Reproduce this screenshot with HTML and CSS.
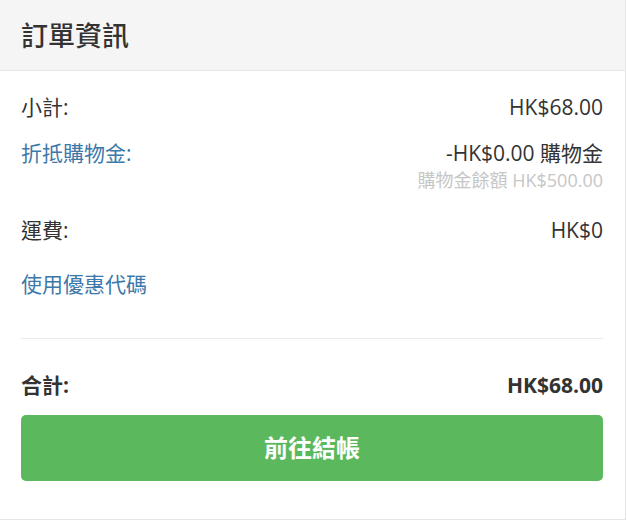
FILE: index.html
```html
<!DOCTYPE html>
<html lang="zh-Hant">
<head>
    <meta charset="UTF-8" />
    <meta name="viewport" content="width=device-width, initial-scale=1.0"/>
    <title>訂單資訊</title>
    <link rel="stylesheet" href="styles.css">
</head>
<body>
    <section class="order-panel">
        <div class="panel-heading">訂單資訊</div>
        <div class="panel-body">
            <div class="row row-subtotal">
                <span>小計:</span>
                <span>HK$68.00</span>
            </div>
            <div class="row row-credit">
                <a href="#" class="link">折抵購物金:</a>
                <div class="credit-values">
                    <span>-HK$0.00 購物金</span>
                    <span class="credit-balance">購物金餘額 HK$500.00</span>
                </div>
            </div>
            <div class="row row-shipping">
                <span>運費:</span>
                <span>HK$0</span>
            </div>
            <div class="row row-coupon">
                <a href="#" class="link">使用優惠代碼</a>
            </div>
            <hr class="divider">
            <div class="row row-total">
                <span>合計:</span>
                <span>HK$68.00</span>
            </div>
            <a href="#" class="btn-checkout">前往結帳</a>
        </div>
    </section>
</body>
</html>
```

FILE: styles.css
```css
* {
    margin: 0;
    padding: 0;
    box-sizing: border-box;
}

body {
    font-family: 'Open Sans', 'Noto Sans CJK TC', sans-serif;
    background: #fff;
    color: #333;
}

.order-panel {
    width: 626px;
    border-right: 1px solid #e6e6e6;
    border-bottom: 1px solid #e6e6e6;
}

.panel-heading {
    background: #f5f5f5;
    border-bottom: 1px solid #e6e6e6;
    height: 71px;
    padding: 0 21px;
    font-size: 27px;
    font-weight: 500;
    line-height: 71px;
    color: #333;
}

.panel-body {
    padding: 22px 22px 38px 21px;
    display: flex;
    flex-direction: column;
}

.row {
    display: flex;
    justify-content: space-between;
    align-items: flex-start;
    font-size: 21px;
    line-height: 28px;
}

.link {
    color: #3d78aa;
    text-decoration: none;
}

.row-credit {
    margin-top: 18px;
}

.credit-values {
    display: flex;
    flex-direction: column;
    align-items: flex-end;
}

.credit-balance {
    color: #c6c6c6;
    font-size: 18px;
    line-height: 26px;
}

.row-shipping {
    margin-top: 23px;
}

.row-coupon {
    margin-top: 26px;
}

.divider {
    border: none;
    border-top: 1px solid #eaeaea;
    margin-top: 40px;
}

.row-total {
    margin-top: 32px;
    font-weight: 700;
}

.btn-checkout {
    display: block;
    margin-top: 16px;
    height: 66px;
    line-height: 66px;
    background: #5cb85c;
    border-radius: 5px;
    color: #fff;
    text-align: center;
    font-size: 24px;
    font-weight: 700;
    text-decoration: none;
}
```
